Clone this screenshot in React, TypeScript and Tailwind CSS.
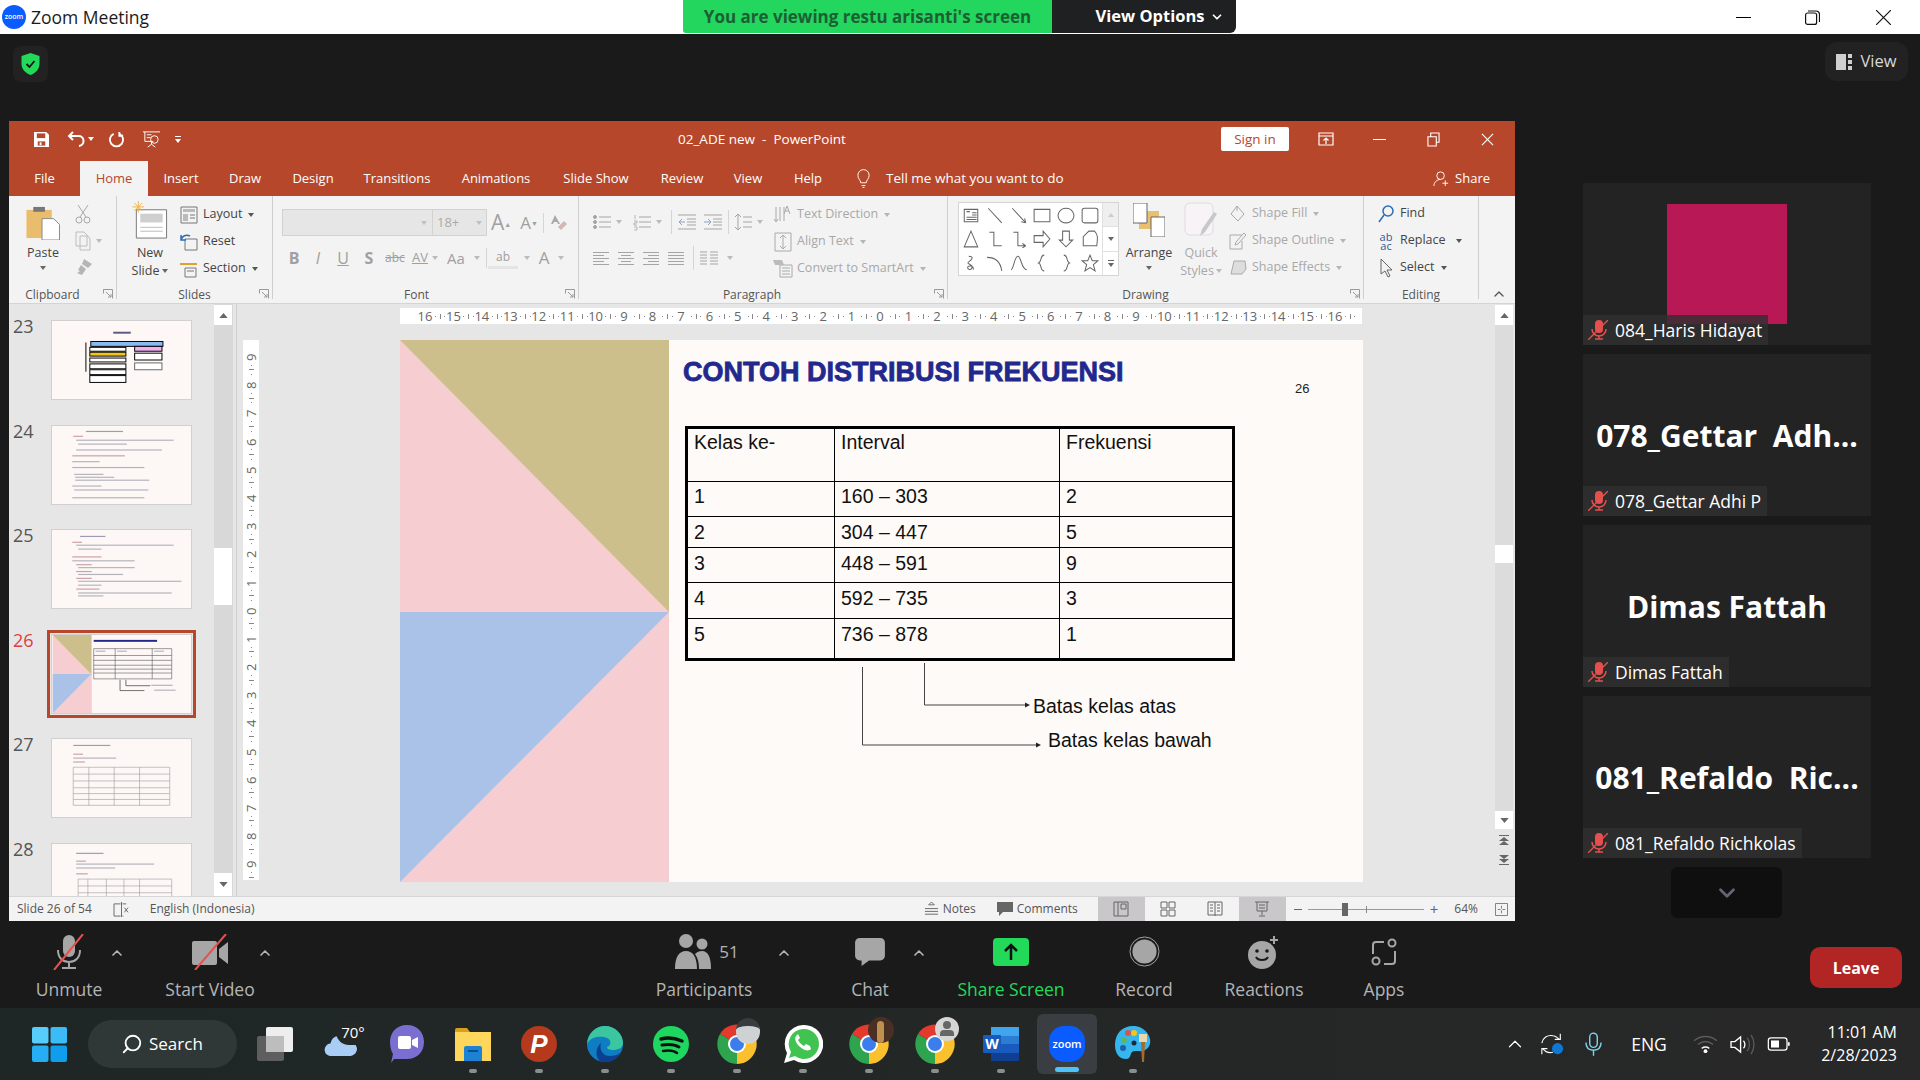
import type { ReactNode } from "react";
import { ChevronDown, ChevronUp, Search } from "lucide-react";

const TABS = [
  { label: "File", cls: "w-[71px]" },
  { label: "Home", cls: "w-[68px]" },
  { label: "Insert", cls: "w-[66px]" },
  { label: "Draw", cls: "w-[62px]" },
  { label: "Design", cls: "w-[74px]" },
  { label: "Transitions", cls: "w-[94px]" },
  { label: "Animations", cls: "w-[104px]" },
  { label: "Slide Show", cls: "w-[96px]" },
  { label: "Review", cls: "w-[76px]" },
  { label: "View", cls: "w-[56px]" },
  { label: "Help", cls: "w-[64px]" },
];

const TABLE_ROWS = [
  { kelas: "Kelas ke-", interval: "Interval", frek: "Frekuensi", cls: "h-[54px]", pad: "pt-[1px]" },
  { kelas: "1", interval: "160 – 303", frek: "2", cls: "h-[35px]", pad: "pt-[2px]" },
  { kelas: "2", interval: "304 – 447", frek: "5", cls: "h-[31px]", pad: "pt-[3px]" },
  { kelas: "3", interval: "448 – 591", frek: "9", cls: "h-[35px]", pad: "pt-[3px]" },
  { kelas: "4", interval: "592 – 735", frek: "3", cls: "h-[36px]", pad: "pt-[3px]" },
  { kelas: "5", interval: "736 – 878", frek: "1", cls: "h-[41px]", pad: "pt-[3px]" },
];

const SHAPES = [
  "M2 3h12v11H2z M4 5h3 M9 6h4 M9 8h4 M4 10h9 M4 12h9",
  "M2 2l12 13",
  "M2 2l12 13 M14 15l-1-4 M14 15l-4-1",
  "M1 3h14v11H1z",
  "M8 2a7 6.5 0 1 0 .01 0z",
  "M3 2h10a2 2 0 0 1 2 2v9a2 2 0 0 1-2 2H3a2 2 0 0 1-2-2V4a2 2 0 0 1 2-2z",
  "M8 1l6 14H2z",
  "M3 2h4v12h7",
  "M3 2h4v12h7 M14 14l-3-2 M14 14l-3 2",
  "M1 5h8V1l6 7-6 7v-4H1z",
  "M5 1h6v8h3l-6 6-6-6h3z",
  "M2 14V6l5-5h5c3 3 3 5 2 13z",
  "M6 2c5 0 3 3 0 5s4 2 3 5-4 2-4 0 6-2 5 2",
  "M1 3c8 0 12 5 13 12",
  "M1 14c2 0 3-12 6-12s3 12 8 12",
  "M10 1C6 1 8 7 5 8c3 1 1 7 5 7",
  "M6 1c4 0 2 6 5 7-3 1-1 7-5 7",
  "M8 1l2 5h5l-4 3.5 1.5 5.5L8 12l-4.500 3L5 9.500 1 6h5z",
];

const TRAY_DOT = "w-[8px] h-[4px] rounded-full bg-[#8b8e8e]";

function Caret({ className = "text-[#666]" }: { className?: string }) {
  return (
    <svg viewBox="0 0 6 4" className={`w-[6px] h-[4px] shrink-0 ${className}`}>
      <path d="M0 0h6L3 4z" fill="currentColor" />
    </svg>
  );
}

function Launcher() {
  return (
    <svg viewBox="0 0 10 10" className="w-[10px] h-[10px] text-[#9a9a9a]" fill="none" stroke="currentColor">
      <path d="M.5.5h9v9M.5.500v4M.5.5h4M3 3l5 5M8 5v3H5" />
    </svg>
  );
}

function Group({ label, className, labelCls = "", children, launcher = true }: { label: string; className: string; labelCls?: string; children: ReactNode; launcher?: boolean }) {
  return (
    <div className={`relative h-[103px] pt-[4px] border-r border-[#cfcfcf] shrink-0 ${className}`}>
      <div className="h-[82px] flex">{children}</div>
      <div className={`h-[18px] mt-[4px] flex items-center justify-center text-[12px] text-[#555] ${labelCls}`}>{label}</div>
      {launcher && (
        <div className="absolute right-[3px] bottom-0">
          <Launcher />
        </div>
      )}
    </div>
  );
}

function RowBtn({ icon, label, caret, off }: { icon: ReactNode; label: string; caret?: boolean; off?: boolean }) {
  return (
    <div className={`h-[27px] flex items-center gap-[4px] text-[12.5px] whitespace-nowrap ${off ? "text-[#a8a8a8]" : "text-[#444]"}`}>
      <span className="w-[20px] h-[20px] flex items-center justify-center shrink-0">{icon}</span>
      {label}
      {caret && <Caret className={off ? "text-[#b5b5b5] ml-[2px]" : "text-[#555] ml-[2px]"} />}
    </div>
  );
}

function Lines({ kind, off = true }: { kind: "left" | "center" | "right" | "justify"; off?: boolean }) {
  const rows = [0, 1, 2, 3, 4];
  const x = (i: number) => {
    if (kind === "justify" || i % 2 === 0) return { a: 0, b: 16 };
    if (kind === "left") return { a: 0, b: 11 };
    if (kind === "center") return { a: 3, b: 13 };
    return { a: 5, b: 16 };
  };
  return (
    <svg viewBox="0 0 16 16" className="w-[16px] h-[16px]" stroke={off ? "#a5a5a5" : "#555"} strokeWidth="1">
      {rows.map((i) => (
        <path key={i} d={`M${x(i).a} ${2.5 + i * 3}H${x(i).b}`} />
      ))}
    </svg>
  );
}

function BulletIcon({ numbered }: { numbered?: boolean }) {
  return (
    <svg viewBox="0 0 18 18" className="w-[18px] h-[18px]" stroke="#a5a5a5" fill="#a5a5a5">
      <path d="M6 4h12M6 9h12M6 14h12" fill="none" />
      {numbered ? (
        <path d="M2 2v4M1 8h3v2H1v2h3M1 14h3v3H1" fill="none" strokeWidth=".8" />
      ) : (
        <>
          <circle cx="2" cy="4" r="1.500" />
          <circle cx="2" cy="9" r="1.500" />
          <circle cx="2" cy="14" r="1.500" />
        </>
      )}
    </svg>
  );
}

function IndentIcon({ dir }: { dir: "in" | "out" }) {
  return (
    <svg viewBox="0 0 18 18" className="w-[18px] h-[18px]" stroke="#a5a5a5" fill="none">
      <path d="M0 2h18M9 6h9M9 9h9M9 12h9M0 16h18" />
      <path d={dir === "out" ? "M7 9H1M4 6L1 9l3 3" : "M0 9h6M4 6l3 3-3 3"} stroke="#8ba3bd" />
    </svg>
  );
}

function Thumb({ n, active, children }: { n: number; active?: boolean; children: ReactNode }) {
  return (
    <div className="flex h-[80px] mb-[24.5px] shrink-0">
      <span className={`w-[42px] pl-[4px] text-[18px] leading-[20px] -mt-[4px] ${active ? "text-[#d9423f]" : "text-[#555]"}`}>{n}</span>
      <div className={`w-[141px] h-[80px] bg-[#fdf8f6] border border-[#d0d0d0] ${active ? "outline-[3px] outline-[#b7472a] outline-offset-[1px]" : ""}`}>
        <svg viewBox="0 0 141 80" className="w-full h-full">
          {children}
        </svg>
      </div>
    </div>
  );
}

function TextLines({ rows }: { rows: [number, number, number, string?][] }) {
  return (
    <>
      {rows.map(([x, y, w, c], i) => (
        <rect key={i} x={x} y={y} width={w} height="1.200" fill={c ?? "#8d8d9c"} opacity=".65" />
      ))}
    </>
  );
}

function Ruler({ vertical }: { vertical?: boolean }) {
  const nums = vertical
    ? [9, 8, 7, 6, 5, 4, 3, 2, 1, 0, 1, 2, 3, 4, 5, 6, 7, 8, 9]
    : [16, 15, 14, 13, 12, 11, 10, 9, 8, 7, 6, 5, 4, 3, 2, 1, 0, 1, 2, 3, 4, 5, 6, 7, 8, 9, 10, 11, 12, 13, 14, 15, 16];
  if (vertical) {
    return (
      <div className="w-[16px] h-[540px] bg-white flex flex-col pt-[9px] overflow-hidden shrink-0">
        {nums.map((n, i) => (
          <div key={i} className="h-[28.2px] shrink-0 flex flex-col items-center justify-between text-[#666]">
            <span className="h-[12px] text-[13px] leading-[12px] [writing-mode:vertical-rl] rotate-180">{n}</span>
            <span className="h-px w-px bg-[#888]" />
            <span className="h-px w-[5px] bg-[#888]" />
            <span className="h-px w-px bg-[#888] mb-[2px]" />
          </div>
        ))}
      </div>
    );
  }
  return (
    <div className="w-[962px] h-[16px] bg-white flex pl-[19px] overflow-hidden">
      {nums.map((n, i) => (
        <div key={i} className="w-[28.45px] shrink-0 flex items-center justify-between text-[#666]">
          <span className="w-[12px] text-center text-[13px] leading-[16px] flex justify-center">{n}</span>
          <span className="w-px h-px bg-[#888]" />
          <span className="w-px h-[5px] bg-[#888]" />
          <span className="w-px h-px bg-[#888] mr-[2px]" />
        </div>
      ))}
    </div>
  );
}

function ScrollBtn({ up, className = "h-[20px]" }: { up?: boolean; className?: string }) {
  return (
    <div className={`w-[18px] bg-white flex items-center justify-center shrink-0 ${className}`}>
      <svg viewBox="0 0 10 6" className="w-[9px] h-[5px]">
        <path d={up ? "M0 6h10L5 0z" : "M0 0h10L5 6z"} fill="#666" />
      </svg>
    </div>
  );
}

function Slide() {
  return (
    <div className="w-[963px] h-[542px] bg-[#fefaf8] flex ml-[141px] shrink-0">
      <svg viewBox="0 0 269 542" className="w-[269px] h-[542px] shrink-0">
        <rect width="269" height="542" fill="#f6cdd1" />
        <path d="M0 0h269v272z" fill="#cdbf8c" />
        <path d="M0 272h269L0 542z" fill="#abc2e8" />
      </svg>
      <div className="flex-1 pl-[16px] pt-[16px] relative">
        <h1 className="-ml-[2px] text-[27px] leading-[32px] font-bold text-[#22288c] font-['Liberation_Sans',sans-serif] [-webkit-text-stroke:0.8px_#22288c] whitespace-nowrap">
          CONTOH DISTRIBUSI FREKUENSI
        </h1>
        <span className="absolute left-[626px] top-[39px] text-[13px] text-[#222] font-['Liberation_Sans',sans-serif]">26</span>
        <table className="mt-[38px] w-[550px] border-collapse border-[3px] border-black table-fixed font-['Liberation_Sans',sans-serif] text-[19.5px] text-[#111] leading-[24px]">
          <tbody>
            {TABLE_ROWS.map((row) => (
              <tr key={row.kelas} className={row.cls}>
                <td className={`w-[148px] border border-black align-top pl-[6px] ${row.pad}`}>{row.kelas}</td>
                <td className={`w-[225px] border border-black align-top pl-[6px] ${row.pad}`}>{row.interval}</td>
                <td className={`border border-black align-top pl-[6px] ${row.pad}`}>{row.frek}</td>
              </tr>
            ))}
          </tbody>
        </table>
        <div className="relative h-[90px] font-['Liberation_Sans',sans-serif] text-[19.5px] text-[#111]">
          <svg viewBox="0 0 500 90" className="w-[500px] h-[90px]" fill="none" stroke="#444">
            <path d="M177.500 6v78H351" />
            <path d="M239.500 2v42H340" />
            <path d="M340 41.500l5 2.500-5 2.500zM351 81.500l5 2.500-5 2.500z" fill="#222" stroke="none" />
          </svg>
          <span className="absolute left-[348px] top-[31px] whitespace-nowrap">Batas kelas atas</span>
          <span className="absolute left-[363px] top-[65px] whitespace-nowrap">Batas kelas bawah</span>
        </div>
      </div>
    </div>
  );
}

function Ribbon() {
  return (
    <div className="h-[108px] bg-[#f3f3f3] border-b border-[#d4d4d4] flex relative shrink-0">
      <Group label="Clipboard" className="w-[108px]" labelCls="pr-[20px]">
        <div className="w-[66px] flex flex-col items-center pl-[2px] pt-[5px] text-[12.5px] text-[#444]">
          <svg viewBox="0 0 34 36" className="w-[34px] h-[35px]">
            <path d="M0 5h26v29H0z" fill="#e9bd6c" />
            <path d="M7 2h12v5H7z" fill="#777" />
            <path d="M16 14h12l6 6v16H16z" fill="#fff" stroke="#888" />
          </svg>
          <span className="leading-[18px] mt-[4px]">Paste</span>
          <span className="mt-[4px]"><Caret /></span>
        </div>
        <div className="flex flex-col items-start gap-[7px] pt-[4px]">
          <svg viewBox="0 0 16 20" className="w-[16px] h-[20px]" fill="none" stroke="#a8a8a8"><path d="M3 1l8 12M13 1L5 13" /><circle cx="4" cy="16" r="3" /><circle cx="12" cy="16" r="3" /></svg>
          <span className="flex items-center gap-[5px]">
            <svg viewBox="0 0 16 20" className="w-[16px] h-[20px]" fill="none" stroke="#bdbdbd"><path d="M1 1h8l3 3v11H1zM5 5h8l2 3v11H5z" /></svg>
            <Caret className="text-[#bbb]" />
          </span>
          <svg viewBox="0 0 18 18" className="w-[18px] h-[18px]" fill="#b5b5b5"><path d="M9 1l8 5-4 4-6-4zM6 7l5 4-4 6-5-2 3-2-2-1z" /></svg>
        </div>
      </Group>

      <Group label="Slides" className="w-[156px]">
        <div className="w-[60px] flex flex-col items-center pt-[1px] pl-[6px] text-[12.5px] leading-[18px] text-[#444]">
          <svg viewBox="0 0 36 40" className="w-[36px] h-[39px]">
            <path d="M4 9h31v29H4z" fill="#fff" stroke="#777" />
            <path d="M8 13h23v9H8z" fill="#cfcfcf" />
            <path d="M8 27h23M8 31h23" stroke="#bbb" />
            <path d="M6 0v12M0 6h12M2 2l8 8M10 2l-8 8" stroke="#eeb44f" />
          </svg>
          <span className="mt-[4px]">New</span>
          <span className="flex items-center gap-[3px]">Slide <Caret /></span>
        </div>
        <div className="flex flex-col pl-[2px] pt-[1px]">
          <RowBtn label="Layout" caret icon={<svg viewBox="0 0 18 18" className="w-[18px] h-[18px]" fill="none" stroke="#777"><path d="M1 1h16v16H1z" /><path d="M3 3h12v3H3zM3 8h5v7H3z" fill="#bbb" stroke="none" /><path d="M10 9h5M10 12h5" /></svg>} />
          <RowBtn label="Reset" icon={<svg viewBox="0 0 18 18" className="w-[18px] h-[18px]" fill="none" stroke="#777"><path d="M5 6h12v11H5z" /><path d="M1 7c1-4 5-6 9-4M1 2v5h5" stroke="#2b6db3" strokeWidth="1.500" /></svg>} />
          <RowBtn label="Section" caret icon={<svg viewBox="0 0 18 18" className="w-[18px] h-[18px]" fill="none" stroke="#777"><path d="M0 4h17" stroke="#e0a030" strokeWidth="2" /><path d="M5 8h11v9H5zM7 11h7" /></svg>} />
        </div>
      </Group>

      <Group label="Font" className="w-[306px]" labelCls="pr-[18px]">
        <div className="flex flex-col pl-[9px] pt-[9px]">
          <div className="flex items-center h-[27px]">
            <div className="w-[151px] h-[27px] bg-[#e6e6e6] border border-[#d2d2d2] flex items-center justify-end pr-[5px]"><Caret className="text-[#c0c0c0]" /></div>
            <div className="w-[54px] h-[27px] bg-[#e6e6e6] border border-[#d2d2d2] border-l-0 flex items-center justify-between px-[4px] text-[13px] text-[#aaa]">18+<Caret className="text-[#c0c0c0]" /></div>
            <span className="ml-[4px] w-[24px] text-[21px] leading-[27px] text-[#a0a0a0]">A<sup className="text-[7px]">▲</sup></span>
            <span className="w-[28px] text-[17px] leading-[27px] text-[#a0a0a0] text-center">A<sup className="text-[7px]">▼</sup></span>
            <span className="w-px h-[20px] bg-[#d5d5d5]" />
            <svg viewBox="0 0 18 18" className="ml-[6px] w-[18px] h-[18px]"><path d="M5 1l-4 9h2l1-2h3l1 2h2z" fill="#aaa" /><path d="M8 13l6-6 3 3-6 6z" fill="#d4b6b6" /></svg>
          </div>
          <div className="flex items-center h-[24px] mt-[10px] text-[#a0a0a0]">
            <span className="w-[24px] text-center text-[16px] font-bold">B</span>
            <span className="w-[24px] text-center text-[16px] italic">I</span>
            <span className="w-[26px] text-center text-[16px] underline">U</span>
            <span className="w-[26px] text-center text-[16px] font-bold">S</span>
            <span className="w-[26px] text-center text-[12px] line-through">abc</span>
            <span className="w-[24px] text-center text-[13px] underline">AV</span>
            <Caret className="text-[#bbb]" />
            <span className="w-[36px] text-center text-[15px]">Aa</span>
            <Caret className="text-[#bbb]" />
            <span className="w-px h-[20px] bg-[#d5d5d5] ml-[6px]" />
            <span className="w-[30px] text-center text-[12px] ml-[1px] border-b-[3px] border-[#e4e4e4] leading-[18px]">ab</span>
            <Caret className="text-[#bbb] ml-[6px]" />
            <span className="w-[28px] text-center text-[17px]">A</span>
            <Caret className="text-[#bbb]" />
          </div>
        </div>
      </Group>

      <Group label="Paragraph" className="w-[369px]" labelCls="pr-[22px]">
        <div className="w-[194px] flex flex-col pl-[14px] pt-[11px] shrink-0">
          <div className="flex items-center h-[22px] gap-[5px]">
            <BulletIcon />
            <Caret className="text-[#bbb]" />
            <span className="ml-[6px]"><BulletIcon numbered /></span>
            <Caret className="text-[#bbb]" />
            <span className="w-px h-[24px] bg-[#d5d5d5] ml-[4px]" />
            <span className="ml-[1px]"><IndentIcon dir="out" /></span>
            <span className="ml-[3px]"><IndentIcon dir="in" /></span>
            <span className="w-px h-[24px] bg-[#d5d5d5] ml-[1px]" />
            <svg viewBox="0 0 18 20" className="w-[18px] h-[20px]" fill="none" stroke="#a5a5a5"><path d="M4 2v16M1 5l3-3 3 3M1 15l3 3 3-3M9 5h9M9 10h9M9 15h9" /></svg>
            <Caret className="text-[#bbb]" />
          </div>
          <div className="flex items-center h-[24px] mt-[13px] gap-[9px]">
            <Lines kind="left" />
            <Lines kind="center" />
            <Lines kind="right" />
            <Lines kind="justify" />
            <span className="w-px h-[24px] bg-[#d5d5d5] -mr-[3px]" />
            <svg viewBox="0 0 18 16" className="w-[18px] h-[16px]" stroke="#a5a5a5"><path d="M0 2h7M0 5h7M0 8h7M0 11h7M0 14h7M10 2h8M10 5h8M10 8h8M10 11h8M10 14h8" /></svg>
            <Caret className="text-[#bbb]" />
          </div>
        </div>
        <div className="flex flex-col pt-[1px]">
          <RowBtn off caret label="Text Direction" icon={<svg viewBox="0 0 20 20" className="w-[20px] h-[20px]" fill="none" stroke="#aaa"><path d="M3 2v14M7 2v14M11 2v14M1 14l2 3 2-3M14 1l-3 8M14 1l3 8M12 6h4" /></svg>} />
          <RowBtn off caret label="Align Text" icon={<svg viewBox="0 0 18 20" className="w-[18px] h-[20px]" fill="none" stroke="#aaa"><path d="M1 1h16v18H1zM9 3v14M6 6l3-3 3 3M6 14l3 3 3-3" /></svg>} />
          <RowBtn off caret label="Convert to SmartArt" icon={<svg viewBox="0 0 20 18" className="w-[20px] h-[18px]" fill="none" stroke="#aaa"><path d="M7 5h12v12H7zM9 8h8M9 11h8M9 14h8" /><path d="M0 0h9l2 5H2z" fill="#bbb" stroke="none" /></svg>} />
        </div>
      </Group>

      <Group label="Drawing" className="w-[416px]" labelCls="pr-[20px]">
        <div className="ml-[10px] mt-[2px] w-[161px] h-[74px] bg-white border border-[#d5d5d5] flex shrink-0">
          <div className="w-[143px] grid grid-cols-6 grid-rows-3">
            {SHAPES.map((d, i) => (
              <div key={i} className="flex items-center justify-center">
                <svg viewBox="0 0 16 16" className="w-[18px] h-[18px]" fill="none" stroke="#666" strokeWidth=".9">
                  <path d={d} />
                </svg>
              </div>
            ))}
          </div>
          <div className="flex-1 flex flex-col border-l border-[#e0e0e0]">
            <div className="flex-1 bg-[#efefef] flex items-center justify-center border-b border-[#e0e0e0]"><svg viewBox="0 0 6 4" className="w-[6px] h-[4px]"><path d="M0 4h6L3 0z" fill="#ccc" /></svg></div>
            <div className="flex-1 flex items-center justify-center border-b border-[#e0e0e0]"><Caret /></div>
            <div className="flex-1 flex flex-col gap-[2px] items-center justify-center"><span className="w-[6px] h-px bg-[#666]" /><Caret /></div>
          </div>
        </div>
        <div className="w-[60px] flex flex-col items-center pt-[3px] text-[12.5px] leading-[18px] text-[#444] shrink-0">
          <svg viewBox="0 0 32 34" className="w-[32px] h-[34px]">
            <path d="M6 8h20v18H6z" fill="#e8c170" />
            <path d="M0 0h14v20H0zM18 14h14v20H18z" fill="#fff" stroke="#666" />
          </svg>
          <span className="mt-[7px]">Arrange</span>
          <span className="mt-[4px]"><Caret /></span>
        </div>
        <div className="w-[44px] flex flex-col items-center pt-[2px] text-[12.5px] leading-[18px] text-[#a8a8a8] shrink-0">
          <svg viewBox="0 0 34 36" className="w-[34px] h-[36px]">
            <rect x="1" y="1" width="28" height="32" rx="5" fill="#f7f3f7" stroke="#ddd" />
            <path d="M33 12l-12 18-5 4 2-7 12-17z" fill="#c8c8c8" />
          </svg>
          <span className="mt-[6px]">Quick</span>
          <span className="flex items-center gap-[2px] whitespace-nowrap">Styles <Caret className="text-[#bbb]" /></span>
        </div>
        <div className="flex flex-col pl-[5px]">
          <RowBtn off caret label="Shape Fill" icon={<svg viewBox="0 0 18 18" className="w-[18px] h-[18px]" fill="none" stroke="#aaa"><path d="M8 1l7 8-6 7-7-7zM8 1v5" /></svg>} />
          <RowBtn off caret label="Shape Outline" icon={<svg viewBox="0 0 18 18" className="w-[18px] h-[18px]" fill="none" stroke="#aaa"><path d="M1 3h12M1 3v14h12V9M15 1l2 2-8 9-3 1 1-3z" /></svg>} />
          <RowBtn off caret label="Shape Effects" icon={<svg viewBox="0 0 18 18" className="w-[18px] h-[18px]" fill="#ddd" stroke="#aaa"><path d="M5 2h11l1 8-4 5H2z" /></svg>} />
        </div>
      </Group>

      <Group label="Editing" className="w-[115px]" launcher={false}>
        <div className="flex flex-col pl-[12px]">
          <RowBtn label="Find" icon={<svg viewBox="0 0 18 20" className="w-[18px] h-[20px]" fill="none" stroke="#2b6db3" strokeWidth="1.500"><circle cx="11" cy="7" r="5" /><path d="M7 11l-5 7" /></svg>} />
          <span className="flex items-center gap-[10px]">
            <RowBtn label="Replace" icon={<span className="text-[11px] leading-[9px] text-[#2b5c9a] text-center">ab<br />ac</span>} />
            <Caret className="text-[#555]" />
          </span>
          <RowBtn label="Select" caret icon={<svg viewBox="0 0 14 20" className="w-[14px] h-[20px]" fill="none" stroke="#666"><path d="M2 1v15l4-3 3 6 2-1-3-6h5z" /></svg>} />
        </div>
      </Group>

      <div className="absolute right-[8px] bottom-[1px]">
        <ChevronUp className="w-[16px] h-[16px] text-[#555]" />
      </div>
    </div>
  );
}

function PowerPoint() {
  return (
    <div className="w-[1506px] h-[800px] flex flex-col font-['Open_Sans','Noto_Sans',sans-serif] shrink-0">
      <div className="h-[75px] bg-[#b7472a] text-white shrink-0">
        <div className="h-[40px] pb-[4px] flex items-center">
          <div className="flex items-center w-[669px] pl-[25px] shrink-0">
            <svg viewBox="0 0 16 16" className="w-[15px] h-[15px]"><path d="M0 0h13l3 3v13H0z" fill="#fff" /><path d="M3 1.500h9v5H3z" fill="#b7472a" /><path d="M4 10h8v4.500H4z" fill="#b7472a" /><path d="M6 11h2v3H6z" fill="#fff" /></svg>
            <svg viewBox="0 0 18 18" className="ml-[18px] w-[18px] h-[18px]" fill="none" stroke="#fff" strokeWidth="2"><path d="M6 2L2 6l4 4M2 6h9a5 5 0 0 1 1 10" /></svg>
            <Caret className="text-white ml-[3px]" />
            <svg viewBox="0 0 18 18" className="ml-[14px] w-[17px] h-[17px]" fill="none" stroke="#fff" strokeWidth="2"><path d="M12 3a7 7 0 1 1-6 0M12 1v4h4" /></svg>
            <svg viewBox="0 0 20 20" className="ml-[17px] w-[19px] h-[19px]" fill="none" stroke="#fff"><path d="M1 2h18M3 2v10h9M10 12v3M6 18l4-3 4 3M5 5h5M5 8h4" /><circle cx="13" cy="10" r="4" /></svg>
            <span className="ml-[14px] flex flex-col items-center gap-[2px]"><span className="w-[6px] h-px bg-white" /><Caret className="text-white" /></span>
          </div>
          <span className="text-[13.5px] whitespace-pre">02_ADE new  -  PowerPoint</span>
          <div className="ml-auto flex items-center">
            <span className="w-[68px] h-[24px] bg-white rounded-[2px] text-[#b7472a] text-[13.5px] flex items-center justify-center">Sign in</span>
            <svg viewBox="0 0 16 16" className="ml-[29px] w-[16px] h-[16px]" fill="none" stroke="#fff" strokeWidth="1.200"><path d="M1 2h14v12H1zM1 5h14M8 13V7M5.500 9.500L8 7l2.500 2.500" /></svg>
            <span className="ml-[39px] w-[13px] h-px bg-white" />
            <svg viewBox="0 0 14 16" className="ml-[41px] w-[13px] h-[15px]" fill="none" stroke="#fff" strokeWidth="1.200"><path d="M1 5h9v10H1zM4 5V1h9v10h-3" /></svg>
            <svg viewBox="0 0 14 14" className="ml-[41px] mr-[21px] w-[13px] h-[13px]" stroke="#fff" strokeWidth="1.200"><path d="M1 1l12 12M13 1L1 13" /></svg>
          </div>
        </div>
        <div className="h-[35px] flex items-stretch text-[13px]">
          {TABS.map((tab) => (
            <div key={tab.label} className={`${tab.cls} flex items-center justify-center shrink-0 ${tab.label === "Home" ? "bg-[#f3f3f3] text-[#b7472a]" : ""}`}>
              {tab.label}
            </div>
          ))}
          <div className="flex items-center ml-[16px]">
            <svg viewBox="0 0 16 20" className="w-[15px] h-[20px]" fill="none" stroke="#fff"><path d="M5 14c0-3-3-4-3-8a6 6 0 0 1 12 0c0 4-3 5-3 8zM6 17h4M7 19h2" /></svg>
            <span className="ml-[15px] text-[13.5px]">Tell me what you want to do</span>
          </div>
          <div className="ml-auto flex items-center pr-[25px]">
            <svg viewBox="0 0 18 18" className="w-[17px] h-[17px]" fill="none" stroke="#fff"><circle cx="8" cy="6" r="4" /><path d="M1 17c0-4 3-7 7-7M13 11v6M10 14h6" /></svg>
            <span className="ml-[5px]">Share</span>
          </div>
        </div>
      </div>

      <Ribbon />

      <div className="h-[592px] bg-[#e6e6e6] flex shrink-0">
        <div className="w-[205px] h-full overflow-hidden pt-[16px] shrink-0 flex flex-col">
          <Thumb n={23}>
            <rect x="62" y="11" width="18" height="2" fill="#5a5a80" />
            <path d="M34 22v30" stroke="#000" fill="none" />
            <g fill="#fff" stroke="#000">
              <rect x="39" y="21" width="74" height="5" fill="#8ab8f0" />
              <rect x="38" y="27" width="37" height="4" />
              <rect x="38" y="32" width="37" height="4" fill="#f5c518" />
              <rect x="38" y="38" width="37" height="4" />
              <rect x="38" y="44" width="37" height="5" />
              <rect x="38" y="50" width="37" height="5" />
              <rect x="38" y="56" width="37" height="7" />
              <rect x="84" y="26" width="28" height="5" fill="#eeb1ee" />
              <rect x="84" y="33" width="28" height="7" />
              <rect x="84" y="43" width="28" height="7" stroke="#666" />
            </g>
          </Thumb>
          <Thumb n={24}>
            <TextLines rows={[[34, 5, 38, "#6a6a90"], [21, 10, 10, "#b4707e"], [24, 14, 100], [26, 18, 50], [24, 24, 88], [20, 30, 54, "#b4707e"], [20, 36, 28], [20, 42, 74], [22, 49, 30], [23, 52, 40], [23, 55, 76], [20, 61, 30], [22, 65, 76], [20, 73, 74]]} />
          </Thumb>
          <Thumb n={25}>
            <TextLines rows={[[28, 6, 26, "#6a6a90"], [20, 12, 10, "#b4707e"], [24, 15, 100], [26, 19, 24], [20, 27, 30, "#b4707e"], [20, 31, 64], [24, 35, 16, "#b4707e"], [26, 38, 58], [24, 42, 16, "#b4707e"], [26, 45, 46], [24, 49, 16, "#b4707e"], [26, 52, 106], [26, 56, 24], [24, 60, 24, "#b4707e"], [26, 64, 96], [26, 67, 26]]} />
          </Thumb>
          <Thumb n={26} active>
            <rect width="40" height="80" fill="#f6cdd1" />
            <path d="M0 0h39.500v40z" fill="#cdbf8c" />
            <path d="M0 40h39.500L0 80z" fill="#abc2e8" />
            <rect x="42" y="5" width="65" height="2" fill="#22288c" />
            <g fill="none" stroke="#555" strokeWidth=".6">
              <path d="M42 14h80v31H42zM64 14v31M102 14v31M42 21h80M42 26h80M42 31h80M42 35h80M42 39h80" />
              <path d="M69 46v11h25M75 46v6h25" stroke="#111" />
            </g>
            <TextLines rows={[[44, 16, 10], [66, 16, 10], [104, 16, 10], [101, 51, 22], [104, 56, 22]]} />
          </Thumb>
          <Thumb n={27}>
            <TextLines rows={[[21, 6, 38, "#6a6a90"], [21, 15, 10, "#b4707e"], [21, 19, 44], [21, 23, 12, "#b4707e"]]} />
            <path d="M21 29h99v39H21zM37 29v39M63 29v39M89 29v39M21 36h99M21 43h99M21 50h99M21 56h99M21 62h99" fill="none" stroke="#999" strokeWidth=".6" />
          </Thumb>
          <Thumb n={28}>
            <TextLines rows={[[24, 9, 28, "#6a6a90"], [24, 17, 10, "#b4707e"], [24, 20, 80], [24, 24, 40], [24, 30, 12, "#b4707e"]]} />
            <path d="M26 36h96v44H26zM36 36v44M55 36v44M73 36v44M89 36v44M26 43h96M26 50h96M26 57h96" fill="none" stroke="#999" strokeWidth=".6" />
          </Thumb>
        </div>
        <div className="w-[19px] pt-[1px] flex flex-col bg-[#d8d8d8] shrink-0">
          <ScrollBtn up className="h-[20px]" />
          <div className="flex-1 relative flex flex-col pt-[223px]">
            <div className="w-[18px] h-[57px] bg-white" />
          </div>
          <ScrollBtn className="h-[23px] mb-[0px]" />
        </div>
        <div className="w-[4px] border-r border-[#cfcfcf] shrink-0" />
        <div className="w-[1258px] shrink-0 flex flex-col pt-[4px]">
          <div className="ml-[163px]"><Ruler /></div>
          <div className="flex mt-[16px] pl-[6px]">
            <Ruler vertical />
            <Slide />
          </div>
        </div>
        <div className="w-[20px] flex flex-col pt-[1px] shrink-0">
          <div className="w-[18px] h-[524px] bg-[#dcdcdc] flex flex-col">
            <ScrollBtn up />
            <div className="w-[18px] h-[18px] bg-white mt-[220px]" />
            <ScrollBtn className="h-[18px] mt-auto" />
          </div>
          <div className="w-[18px] flex flex-col items-center gap-[8px] mt-[5px] text-[#666]">
            <svg viewBox="0 0 10 12" className="w-[10px] h-[12px]" fill="currentColor"><path d="M0 1h10v1H0zM5 3l5 4H0zM5 7l5 4H0z" /></svg>
            <svg viewBox="0 0 10 12" className="w-[10px] h-[12px]" fill="currentColor"><path d="M0 1h10L5 5zM0 5h10L5 9zM0 10h10v1H0z" /></svg>
          </div>
        </div>
      </div>

      <div className="h-[25px] bg-[#f3f3f3] border-t border-[#d6d6d6] flex items-center text-[12px] text-[#555] shrink-0">
        <span className="ml-[8px]">Slide 26 of 54</span>
        <svg viewBox="0 0 18 16" className="ml-[21px] w-[17px] h-[15px]" fill="none" stroke="#666"><path d="M8 2H1v13h7M10 2h4M10 15h1M9 0v16M12 6l4 5M16 6l-4 5" /></svg>
        <span className="ml-[20px]">English (Indonesia)</span>
        <div className="ml-auto flex items-center h-full">
          <svg viewBox="0 0 16 16" className="w-[15px] h-[15px]" stroke="#666" fill="none"><path d="M5 3l3-3 3 3zM1 7h14M1 10h14M1 13h14" /></svg>
          <span className="ml-[4px]">Notes</span>
          <svg viewBox="0 0 18 16" className="ml-[20px] w-[18px] h-[16px]" fill="#666"><path d="M1 1h16v10H7l-4 4v-4H1z" /></svg>
          <span className="ml-[3px]">Comments</span>
          <div className="ml-[20px] w-[47px] h-full bg-[#c9c7c9] flex items-center justify-center"><svg viewBox="0 0 16 16" className="w-[16px] h-[16px]" fill="none" stroke="#666"><path d="M1 1h14v14H1zM5 1v14M8 3h5v5H8z" /></svg></div>
          <div className="w-[47px] flex items-center justify-center"><svg viewBox="0 0 16 16" className="w-[16px] h-[16px]" fill="none" stroke="#666"><path d="M1 1h6v6H1zM9 1h6v6H9zM1 9h6v6H1zM9 9h6v6H9z" /></svg></div>
          <div className="w-[47px] flex items-center justify-center"><svg viewBox="0 0 16 16" className="w-[16px] h-[16px]" fill="none" stroke="#666"><path d="M1 1h14v13H1zM8 1v14M3 4h3M3 7h3M3 10h3M10 4h3M10 7h3M10 10h3" /></svg></div>
          <div className="w-[47px] h-full bg-[#c9c7c9] flex items-center justify-center"><svg viewBox="0 0 16 16" className="w-[16px] h-[16px]" fill="none" stroke="#666"><path d="M1 1h14M3 1v9h10V1M8 10v4M5 15h6M5 4h6M5 7h6" /></svg></div>
          <span className="ml-[8px] w-[8px] h-px bg-[#666]" />
          <div className="ml-[6px] w-[116px] h-px bg-[#999] relative">
            <span className="absolute left-[34px] -top-[6px] w-[6px] h-[13px] bg-[#666]" />
            <span className="absolute left-[58px] -top-[3px] w-px h-[7px] bg-[#888]" />
          </div>
          <span className="ml-[6px] text-[15px] leading-none text-[#666]">+</span>
          <span className="ml-[16px]">64%</span>
          <svg viewBox="0 0 14 14" className="ml-[17px] mr-[7px] w-[13px] h-[13px]" fill="none" stroke="#777"><path d="M.5.5h13v13H.5zM3 7h3M8 7h3M7 3v3M7 8v3" /></svg>
        </div>
      </div>
    </div>
  );
}

function MicMuted() {
  return (
    <svg viewBox="0 0 36 36" className="w-[36px] h-[36px]" fill="none">
      <rect x="12" y="1" width="12" height="22" rx="6" fill="#a6a6a6" />
      <path d="M7 16c0 8 5 12 11 12s11-4 11-12M18 28v6M11 34h14" stroke="#a6a6a6" strokeWidth="2" />
      <path d="M32 0L3 36" stroke="#e4524f" strokeWidth="2" />
    </svg>
  );
}

function ToolItem({ label, icon, cls, labelCls = "text-[#b4b4b4]" }: { label: string; icon: ReactNode; cls: string; labelCls?: string }) {
  return (
    <div className={`flex flex-col items-center shrink-0 ${cls}`}>
      <div className="h-[46px] flex items-center justify-center">{icon}</div>
      <span className={`text-[17.5px] leading-[24px] mt-[2px] whitespace-nowrap ${labelCls}`}>{label}</span>
    </div>
  );
}

function UpTick({ cls }: { cls: string }) {
  return <ChevronUp className={`w-[16px] h-[16px] text-[#b4b4b4] -mt-[24px] shrink-0 ${cls}`} strokeWidth={2.5} />;
}

function Toolbar() {
  return (
    <div className="h-[87px] flex items-center font-['Open_Sans','Noto_Sans',sans-serif] shrink-0">
      <ToolItem cls="w-[120px]" label="Unmute" icon={<MicMuted />} />
      <UpTick cls="-ml-[20px]" />
      <ToolItem cls="w-[130px] ml-[20px]" label="Start Video" icon={
        <svg viewBox="0 0 38 36" className="w-[38px] h-[36px]" fill="none">
          <path d="M1 9a2 2 0 0 1 2-2h21a2 2 0 0 1 2 2v20a2 2 0 0 1-2 2H3a2 2 0 0 1-2-2zM28 15l9-7v22l-9-7z" fill="#a6a6a6" />
          <path d="M35 0L4 36" stroke="#e4524f" strokeWidth="2" />
        </svg>
      } />
      <UpTick cls="-ml-[18px]" />
      <ToolItem cls="w-[120px] ml-[371px]" label="Participants" icon={
        <span className="flex items-center gap-[8px] pl-[6px]">
          <svg viewBox="0 0 36 38" className="w-[36px] h-[38px]" fill="#a6a6a6">
            <circle cx="11" cy="8" r="7" /><circle cx="27" cy="11" r="5.500" />
            <path d="M0 36c0-12 4-18 11-18s11 6 11 18zM24 36c0-6-1-11-4-15 2-2 4-3 7-3 6 0 9 6 9 18z" />
          </svg>
          <span className="text-[#b4b4b4] text-[17px]">51</span>
        </span>
      } />
      <UpTick cls="ml-[12px]" />
      <ToolItem cls="w-[80px] ml-[38px]" label="Chat" icon={
        <svg viewBox="0 0 32 30" className="w-[30px] h-[28px]" fill="#a6a6a6"><path d="M5 0h22a5 5 0 0 1 5 5v14a5 5 0 0 1-5 5H15l-8 6v-6H5a5 5 0 0 1-5-5V5a5 5 0 0 1 5-5z" /></svg>
      } />
      <UpTick cls="ml-[1px]" />
      <ToolItem cls="w-[130px] ml-[19px]" label="Share Screen" labelCls="text-[#23d959]" icon={
        <svg viewBox="0 0 36 28" className="w-[36px] h-[28px]"><rect width="36" height="28" rx="4" fill="#23d959" /><path d="M18 22V8M12 13l6-6 6 6" fill="none" stroke="#111" strokeWidth="2.500" /></svg>
      } />
      <ToolItem cls="w-[100px] ml-[18px]" label="Record" icon={
        <svg viewBox="0 0 32 32" className="w-[31px] h-[31px]" fill="#a6a6a6"><circle cx="16" cy="16" r="12.500" /><circle cx="16" cy="16" r="15" fill="none" stroke="#a6a6a6" /></svg>
      } />
      <ToolItem cls="w-[120px] ml-[10px]" label="Reactions" icon={
        <svg viewBox="0 0 32 34" className="w-[32px] h-[34px]">
          <circle cx="14" cy="20" r="14" fill="#a6a6a6" />
          <path d="M26 1v8M22 5h8" stroke="#a6a6a6" strokeWidth="2" />
          <circle cx="9" cy="16" r="1.800" fill="#1a1a1a" /><circle cx="19" cy="16" r="1.800" fill="#1a1a1a" />
          <path d="M8 22c2 4 10 4 12 0" stroke="#1a1a1a" strokeWidth="2" fill="none" />
        </svg>
      } />
      <ToolItem cls="w-[100px] ml-[10px]" label="Apps" icon={
        <svg viewBox="0 0 26 30" className="w-[26px] h-[30px]" fill="none" stroke="#a6a6a6" strokeWidth="2">
          <path d="M2 17V8a3 3 0 0 1 3-3h8M24 14v10a3 3 0 0 1-3 3H13" />
          <circle cx="21" cy="6" r="3.500" /><circle cx="5" cy="24" r="3.500" />
        </svg>
      } />
    </div>
  );
}

function Tile({ big, name, avatar }: { big?: string; name: string; avatar?: boolean }) {
  return (
    <div className="relative w-[288px] h-[162px] bg-[#232323] flex items-center justify-center shrink-0">
      {avatar && <div className="w-[120px] h-[120px] bg-[#b91856]" />}
      {big && <span className="text-white font-bold text-[30px] whitespace-pre">{big}</span>}
      <div className="absolute left-0 bottom-0 h-[30px] bg-[#303030]/80 flex items-center pl-[5px] pr-[6px] gap-[7px]">
        <svg viewBox="0 0 20 20" className="w-[20px] h-[20px]" fill="none">
          <rect x="7" y="0" width="8" height="13" rx="4" fill="#e5504f" />
          <path d="M4 9c0 4 3 7 7 7s7-3 7-7M11 16v3M7 19h8" stroke="#e5504f" strokeWidth="1.500" />
          <path d="M20 0L0 20" stroke="#e5504f" strokeWidth="1.300" />
        </svg>
        <span className="text-white text-[17.5px] whitespace-nowrap">{name}</span>
      </div>
    </div>
  );
}

function ChromeIcon({ badge }: { badge?: ReactNode }) {
  return (
    <div className="relative w-[40px] h-[40px]">
      <svg viewBox="0 0 40 40" className="w-[40px] h-[40px]">
        <path d="M20 20L3 10A20 20 0 0 1 37 10z" fill="#e5392e" />
        <path d="M20 20L37 10A20 20 0 0 1 20 40z" fill="#fbc02d" />
        <path d="M20 20L20 40A20 20 0 0 1 3 10z" fill="#2fa44f" />
        <circle cx="20" cy="20" r="9" fill="#fff" />
        <circle cx="20" cy="20" r="7" fill="#3b7ded" />
      </svg>
      {badge}
    </div>
  );
}

function TaskIcon({ children, dot = true }: { children: ReactNode; dot?: boolean }) {
  return (
    <div className="w-[66px] h-[72px] flex flex-col items-center pt-[13px] shrink-0">
      <div className="h-[46px] flex items-center justify-center">{children}</div>
      <span className={`mt-[2px] ${dot ? TRAY_DOT : ""}`} />
    </div>
  );
}

function Taskbar() {
  return (
    <div className="h-[72px] bg-linear-to-r from-[#1e2726] via-[#232726] to-[#282828] flex items-center font-['Open_Sans','Noto_Sans',sans-serif] text-white shrink-0">
      <svg viewBox="0 0 35 35" className="ml-[32px] w-[35px] h-[35px] shrink-0">
        <rect width="16.500" height="16.500" rx="2" fill="#56cdfb" />
        <rect x="18.500" width="16.500" height="16.500" rx="2" fill="#3cbcf7" />
        <rect y="18.500" width="16.500" height="16.500" rx="2" fill="#25aef3" />
        <rect x="18.500" y="18.500" width="16.500" height="16.500" rx="2" fill="#0f9ded" />
      </svg>
      <div className="ml-[21px] w-[149px] h-[48px] rounded-[24px] bg-[#2f3836] flex items-center pl-[33px] shrink-0">
        <Search className="w-[22px] h-[22px] -scale-x-100" />
        <span className="ml-[6px] text-[17px]">Search</span>
      </div>
      <div className="ml-[5px] flex items-start h-full">
        <TaskIcon dot={false}>
          <div className="relative w-[36px] h-[34px]">
            <div className="absolute left-0 top-[9px] w-[27px] h-[25px] rounded-[2px] bg-[#5e5e5e]" />
            <div className="absolute left-[9px] top-0 w-[27px] h-[25px] rounded-[2px] bg-[#eeeeee]" />
            <div className="absolute left-[9px] top-[9px] w-[18px] h-[16px] bg-[#bdbdbd]" />
          </div>
        </TaskIcon>
        <TaskIcon dot={false}>
          <div className="relative w-[46px] h-[46px]">
            <svg viewBox="0 0 36 26" className="absolute left-[4px] top-[12px] w-[38px] h-[23px]"><path d="M7 26a7 7 0 0 1-1-14 11 11 0 0 1 21-2 8 8 0 0 1 2 16z" fill="#a9cdf5" /></svg>
            <span className="absolute left-[18px] top-[-2px] w-[34px] h-[26px] rounded-full bg-[#232726] flex items-center justify-center text-[15px]">70°</span>
          </div>
        </TaskIcon>
        <TaskIcon dot={false}>
          <svg viewBox="0 0 34 38" className="w-[34px] h-[38px]">
            <path d="M17 0c10 0 17 7 17 17s-7 17-17 17H4l-3 4 2-9C1 26 0 21 0 17 0 7 7 0 17 0z" fill="#7a6fd0" />
            <rect x="8" y="11" width="13" height="13" rx="2" fill="#fff" />
            <path d="M22 15l6-3v11l-6-3z" fill="#fff" />
          </svg>
        </TaskIcon>
        <TaskIcon>
          <svg viewBox="0 0 36 34" className="w-[36px] h-[34px]">
            <path d="M0 3a2 2 0 0 1 2-2h10l3 4H0z" fill="#d9a11b" />
            <rect y="5" width="36" height="29" fill="#fdd65b" />
            <path d="M9 21a2 2 0 0 1 2-2h14a2 2 0 0 1 2 2v13H9z" fill="#1b82d4" />
            <rect x="13" y="23" width="10" height="2" fill="#0b4f8a" />
          </svg>
        </TaskIcon>
        <TaskIcon>
          <div className="w-[36px] h-[36px] rounded-full bg-[#b5391c] flex items-center justify-center">
            <span className="text-white font-bold text-[26px] leading-none italic font-['Liberation_Sans',sans-serif]">P</span>
          </div>
        </TaskIcon>
        <TaskIcon>
          <svg viewBox="0 0 36 36" className="w-[36px] h-[36px]">
            <circle cx="18" cy="18" r="18" fill="#0f7dc2" />
            <path d="M0 18C1 7 9 0 18 0c10 0 18 8 18 17 0 5-5 7-10 7-4 0-6-1-6-3 5-1 5-9-3-10C9 10 3 12 0 18z" fill="#3cc6a0" />
            <path d="M14 36C8 32 8 22 14 17c-2 7 2 13 8 13 5 0 9-1 12-4-3 6-10 12-20 10z" fill="#0b3f8f" />
          </svg>
        </TaskIcon>
        <TaskIcon>
          <svg viewBox="0 0 36 36" className="w-[36px] h-[36px]" fill="none" stroke="#111" strokeLinecap="round">
            <circle cx="18" cy="18" r="18" fill="#1ed760" stroke="none" />
            <path d="M8 13c7-2 14-1 21 2" strokeWidth="3.500" />
            <path d="M9 19c6-1 12-1 17 2" strokeWidth="3" />
            <path d="M10 25c5-1 10-1 14 2" strokeWidth="2.500" />
          </svg>
        </TaskIcon>
        <TaskIcon>
          <ChromeIcon badge={<span className="absolute left-[19px] -top-[6px] w-[24px] h-[26px] rounded-full bg-[#cfd2d2] border-t-[8px] border-[#3a3d3d]" />} />
        </TaskIcon>
        <TaskIcon>
          <svg viewBox="0 0 40 40" className="w-[40px] h-[40px]">
            <path d="M20 1a19 19 0 1 1-9 35L1 39l3-10A19 19 0 0 1 20 1z" fill="#fff" />
            <path d="M20 5a15 15 0 1 1-8 27l-6 2 2-6A15 15 0 0 1 20 5z" fill="#40c351" />
            <path d="M14 11c-3 2-2 7 2 11s9 6 12 3l-1-3-4-2-2 2c-2-1-5-4-6-6l2-2-2-4z" fill="#fff" />
          </svg>
        </TaskIcon>
        <TaskIcon>
          <ChromeIcon badge={<span className="absolute left-[19px] -top-[7px] w-[26px] h-[26px] rounded-full bg-[#4a2f25] overflow-hidden"><span className="block ml-[9px] mt-[4px] w-[7px] h-[22px] bg-[#c0904e] rounded-full" /></span>} />
        </TaskIcon>
        <TaskIcon>
          <ChromeIcon badge={
            <span className="absolute left-[20px] -top-[7px] w-[24px] h-[24px] rounded-full bg-[#d6d6d6] flex flex-col items-center pt-[4px]">
              <span className="w-[8px] h-[8px] rounded-full bg-[#666]" />
              <span className="w-[14px] h-[6px] mt-[1px] rounded-t-[4px] bg-[#666]" />
            </span>
          } />
        </TaskIcon>
        <TaskIcon>
          <div className="relative w-[36px] h-[34px]">
            <svg viewBox="0 0 36 34" className="w-[36px] h-[34px]">
              <path d="M8 0h26a2 2 0 0 1 2 2v30a2 2 0 0 1-2 2H8z" fill="#2b7cd3" />
              <path d="M8 0h28v9H8z" fill="#41a5ee" />
              <path d="M8 17h28v9H8z" fill="#185abd" />
              <path d="M8 26h28v8H8z" fill="#103f91" />
              <rect y="8" width="18" height="18" rx="1" fill="#185abd" />
            </svg>
            <span className="absolute left-0 top-[8px] w-[18px] h-[18px] text-white text-[14px] font-bold leading-[18px] text-center">W</span>
          </div>
        </TaskIcon>
        <div className="w-[66px] h-[72px] flex flex-col items-center justify-center shrink-0">
          <div className="w-[60px] h-[60px] rounded-[6px] bg-[#3a3d42] flex flex-col items-center pt-[12px] relative">
            <div className="w-[36px] h-[36px] rounded-[15px] bg-[#0b5cff] flex items-center justify-center text-white text-[11px] font-semibold">zoom</div>
            <span className="absolute bottom-[2px] w-[24px] h-[5px] rounded-full bg-[#4fc3f7]" />
          </div>
        </div>
        <TaskIcon>
          <svg viewBox="0 0 36 38" className="w-[36px] h-[38px]">
            <path d="M20 1C8 0 0 8 0 20c0 8 4 14 11 14 5 0 4-5 6-7 3-2 8 0 11-1 6-2 8-7 7-12C33 6 27 2 20 1z" fill="#36b6ee" />
            <circle cx="9" cy="15" r="3" fill="#5cb85c" /><circle cx="13" cy="8" r="3" fill="#d9534f" /><circle cx="19" cy="8" r="3" fill="#f5c518" /><circle cx="8" cy="23" r="3" fill="#1f5fa8" />
            <circle cx="19" cy="18" r="2.500" fill="#1a2a3a" />
            <path d="M26 17h4l-1 20h-2z" fill="#a8692f" />
            <path d="M24 9h8v8h-8z" fill="#e8d8b0" />
          </svg>
        </TaskIcon>
      </div>
      <div className="ml-auto flex items-center pr-[23px]">
        <ChevronUp className="w-[22px] h-[22px]" strokeWidth={1.3} />
        <svg viewBox="0 0 26 26" className="ml-[14px] w-[24px] h-[24px]" fill="none" stroke="#fff" strokeWidth="1.200">
          <path d="M2 12c1-6 6-9 12-8 3 0 5 2 7 4M22 2v6h-6M2 24v-6h6M3 18c3 4 7 5 11 4" />
          <circle cx="19" cy="18" r="6" fill="#0f78d4" stroke="none" />
        </svg>
        <svg viewBox="0 0 18 26" className="ml-[21px] w-[17px] h-[25px]" fill="none" stroke="#7fd4ea" strokeWidth="1.500"><rect x="5" y="1" width="8" height="15" rx="4" /><path d="M1 11c0 5 3 8 8 8s8-3 8-8M9 19v6" /></svg>
        <span className="ml-[29px] text-[17.5px] w-[36px]">ENG</span>
        <svg viewBox="0 0 26 20" className="ml-[26px] w-[25px] h-[19px]" fill="none" strokeWidth="1.500"><path d="M1 6c7-6 17-6 24 0M5 10c5-4 11-4 16 0" stroke="#5a5a5a" /><path d="M9 14c3-2 5-2 8 0" stroke="#fff" /><circle cx="13" cy="17" r="2" fill="#fff" /></svg>
        <svg viewBox="0 0 26 22" className="ml-[12px] w-[25px] h-[21px]" fill="none" stroke="#fff" strokeWidth="1.400"><path d="M1 8v6h4l6 5V3L5 8zM14 7c2 2 2 6 0 8" /><path d="M18 4c3 4 3 10 0 14M22 1c4 6 4 14 0 20" stroke="#5a5a5a" /></svg>
        <svg viewBox="0 0 26 18" className="ml-[12px] w-[24px] h-[16px]" fill="none" stroke="#fff" strokeWidth="1.400"><rect x="1" y="2" width="21" height="14" rx="3" /><path d="M24 7v4" strokeWidth="2" /><rect x="4" y="5" width="9" height="8" fill="#fff" stroke="none" /></svg>
        <div className="ml-[30px] flex flex-col items-end text-[16px] leading-[23px]">
          <span>11:01 AM</span>
          <span>2/28/2023</span>
        </div>
      </div>
    </div>
  );
}

export default function App() {
  return (
    <div className="w-[1920px] h-[1080px] bg-[#1a1a1a] flex flex-col overflow-hidden font-['Open_Sans','Noto_Sans',sans-serif]">
      <div className="h-[34px] bg-white flex shrink-0">
        <div className="w-[683px] flex items-center shrink-0">
          <div className="ml-[2px] w-[24px] h-[24px] rounded-full bg-[#0b5cff] flex items-center justify-center text-white text-[7px] font-semibold">zoom</div>
          <span className="ml-[5px] text-[17.5px] text-[#1b1b1b]">Zoom Meeting</span>
        </div>
        <div className="w-[369px] h-[33px] bg-[#22d65e] rounded-bl-[3px] flex items-center justify-center font-bold text-[17px] text-[#1d5f35] shrink-0">
          You are viewing restu arisanti's screen
        </div>
        <div className="w-[184px] h-[33px] bg-[#1f2022] rounded-br-[6px] flex items-center justify-center gap-[6px] pl-[32px] font-bold text-[16.5px] text-white shrink-0">
          View Options
          <ChevronDown className="w-[14px] h-[14px]" strokeWidth={3} />
        </div>
        <div className="ml-auto flex items-center">
          <span className="w-[15px] h-[1px] bg-black" />
          <svg viewBox="0 0 15 15" className="ml-[54px] w-[15px] h-[15px]" fill="none" stroke="#111" strokeWidth="1.200"><rect x=".6" y="3" width="11" height="11.400" rx="2" /><path d="M3 1h8a3.500 3.500 0 0 1 3.500 3.500V12" /></svg>
          <svg viewBox="0 0 15 15" className="ml-[56px] mr-[29px] w-[15px] h-[15px]" stroke="#111" strokeWidth="1.200"><path d="M0 0l15 15M15 0L0 15" /></svg>
        </div>
      </div>

      <div className="h-[974px] flex shrink-0">
        <div className="w-[1583px] pl-[9px] flex flex-col shrink-0">
          <div className="h-[87px] shrink-0 pt-[12px] pl-[4px]">
            <div className="w-[35px] h-[36px] rounded-[8px] bg-[#222] flex items-center justify-center">
              <svg viewBox="0 0 18 22" className="w-[19px] h-[22px]">
                <path d="M9 0l9 3v8c0 5-4 9-9 11-5-2-9-6-9-11V3z" fill="#23d959" />
                <path d="M5 11l3 3 5-6" fill="none" stroke="#111" strokeWidth="1.800" />
              </svg>
            </div>
          </div>
          <PowerPoint />
          <Toolbar />
        </div>
        <div className="w-[337px] flex flex-col shrink-0">
          <div className="h-[149px] pt-[8px] shrink-0 flex justify-end pr-[12px]">
            <div className="w-[83px] h-[39px] rounded-[12px] bg-[#222] flex items-center justify-center gap-[8px] text-[#d8d8d8] text-[16.5px]">
              <svg viewBox="0 0 16 16" className="w-[16px] h-[16px]" fill="#cfcfcf"><path d="M0 0h10v16H0zM12 0h4v4h-4zM12 6h4v4h-4zM12 12h4v4h-4z" /></svg>
              View
            </div>
          </div>
          <div className="flex flex-col gap-[9px]">
            <Tile avatar name="084_Haris Hidayat" />
            <Tile big="078_Gettar  Adh..." name="078_Gettar Adhi P" />
            <Tile big="Dimas Fattah" name="Dimas Fattah" />
            <Tile big="081_Refaldo  Ric..." name="081_Refaldo Richkolas" />
          </div>
          <div className="mt-[9px] ml-[88px] w-[111px] h-[51px] rounded-[6px] bg-[#0f0f0f] flex items-center justify-center shrink-0">
            <ChevronDown className="w-[26px] h-[26px] text-[#66646f]" strokeWidth={2.5} />
          </div>
          <div className="mt-[29px] ml-[227px] w-[92px] h-[41px] rounded-[10px] bg-[#b22525] flex items-center justify-center text-white font-bold text-[16px] shrink-0">
            Leave
          </div>
        </div>
      </div>

      <Taskbar />
    </div>
  );
}
